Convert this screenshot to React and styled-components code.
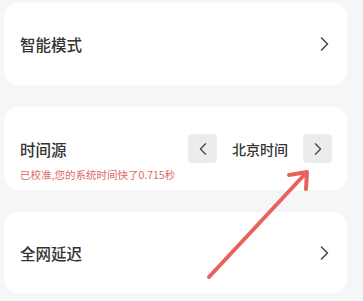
import React from "react";
import styled, { createGlobalStyle } from "styled-components";

const Global = createGlobalStyle`
  html, body {
    margin: 0;
    padding: 0;
    background: #f4f6f7;
    font-family: "Noto Sans CJK SC", "Noto Sans", sans-serif;
  }
`;

const Page = styled.div`
  position: relative;
  width: 363px;
  height: 301px;
  overflow: hidden;
  box-sizing: border-box;
  padding: 3px 16px 0 4px;
  display: flex;
  flex-direction: column;
  gap: 22px;
`;

const Card = styled.div`
  background: #ffffff;
  border-radius: 14px;
  box-sizing: border-box;
  height: ${(p) => p.$h}px;
  padding: ${(p) => p.$pad || "0 18px 0 16px"};
  display: flex;
  flex-direction: column;
  justify-content: ${(p) => (p.$top ? "flex-start" : "center")};
`;

const Row = styled.div`
  display: flex;
  align-items: center;
  justify-content: space-between;
  height: ${(p) => p.$h || 29}px;
`;

const Title = styled.div`
  font-size: 15.5px;
  font-weight: 500;
  color: #333333;
  line-height: 20px;
`;

const Sub = styled.div`
  margin-top: 6px;
  font-size: 10.5px;
  line-height: 12px;
  color: #e06868;
`;

const Controls = styled.div`
  display: flex;
  align-items: center;
`;

const StepButton = styled.div`
  width: 29px;
  height: 29px;
  border-radius: 4px;
  background: #ececec;
  display: flex;
  align-items: center;
  justify-content: center;
`;

const Value = styled.div`
  width: 86px;
  text-align: center;
  font-size: 14px;
  font-weight: 500;
  color: #333333;
`;

const Overlay = styled.svg`
  position: absolute;
  left: 0;
  top: 0;
  pointer-events: none;
`;

const Chevron = ({ left, w = 9, h = 14, sw = 1.6 }) => (
  <svg width={w} height={h} viewBox="0 0 9 14" fill="none">
    <polyline
      points={left ? "7.5,1 1.5,7 7.5,13" : "1.5,1 7.5,7 1.5,13"}
      stroke="#4a4a4a"
      strokeWidth={sw}
      strokeLinecap="round"
      strokeLinejoin="round"
    />
  </svg>
);

export default function App() {
  return (
    <>
      <Global />
      <Page>
        <Card $h={82}>
          <Row>
            <Title>智能模式</Title>
            <Chevron />
          </Row>
        </Card>
        <Card $h={83} $top $pad="27px 15px 0 16px">
          <Row>
            <Title>时间源</Title>
            <Controls>
              <StepButton>
                <Chevron left w={8} h={12} sw={1.6} />
              </StepButton>
              <Value>北京时间</Value>
              <StepButton>
                <Chevron w={8} h={12} sw={1.6} />
              </StepButton>
            </Controls>
          </Row>
          <Sub>已校准,您的系统时间快了0.715秒</Sub>
        </Card>
        <Card $h={81}>
          <Row>
            <Title>全网延迟</Title>
            <Chevron />
          </Row>
        </Card>
        <Overlay width="363" height="301" viewBox="0 0 363 301">
          <g stroke="#e8625a" strokeWidth="4" strokeLinecap="round" strokeLinejoin="round" fill="none">
            <line x1="209" y1="277" x2="306" y2="173" />
            <polyline points="289,175 307,172 306,189" />
          </g>
        </Overlay>
      </Page>
    </>
  );
}
